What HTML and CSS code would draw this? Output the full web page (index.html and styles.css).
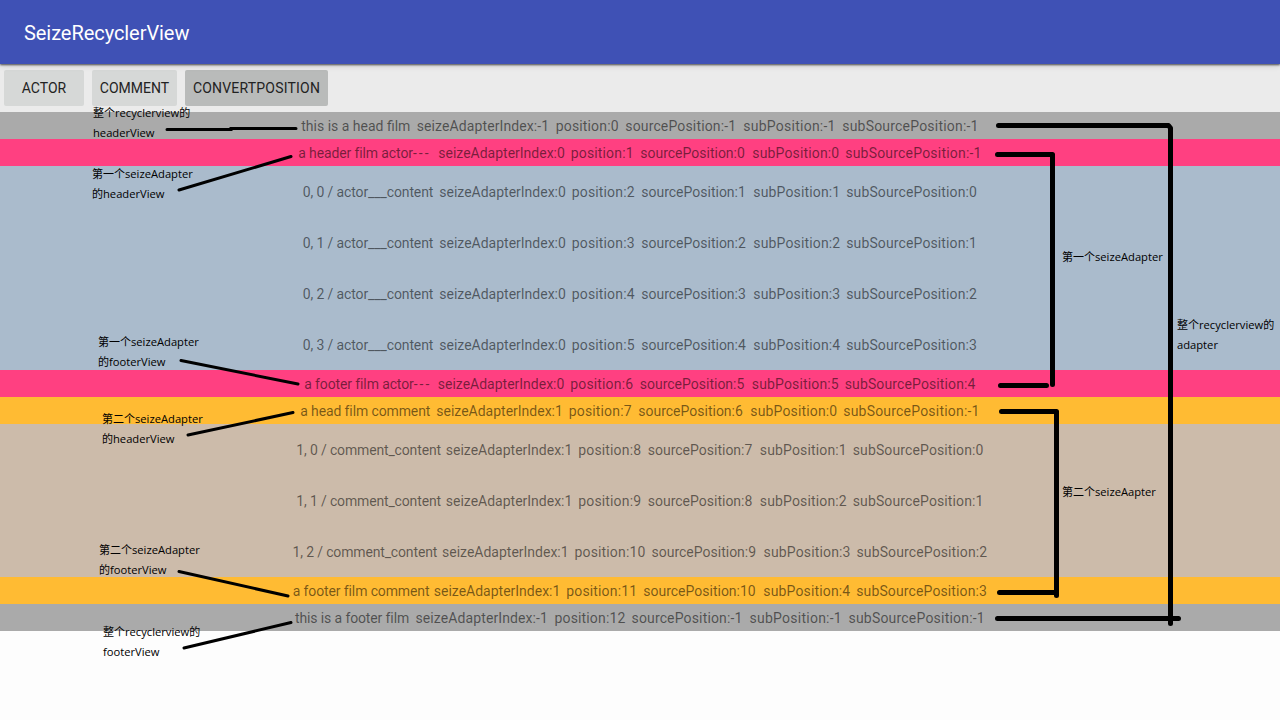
FILE: index.html
```html
<!DOCTYPE html>
<html lang="zh">
<head>
<meta charset="utf-8">
<title>SeizeRecyclerView</title>
<link rel="stylesheet" href="styles.css">
</head>
<body>
<div class="screen">
<header class="app-bar"><h1 class="title">SeizeRecyclerView</h1></header>
<nav class="toolbar">
<button class="btn btn-actor">ACTOR</button>
<button class="btn btn-comment">COMMENT</button>
<button class="btn btn-convert">CONVERTPOSITION</button>
</nav>
<main class="list">
<div class="row gray"><span class="label head">this is a head film</span><span class="seize neg">seizeAdapterIndex:-1</span><span class="pos">position:0</span><span class="source neg">sourcePosition:-1</span><span class="sub neg">subPosition:-1</span><span class="subsource neg">subSourcePosition:-1</span></div>
<div class="row pink"><span class="label actor-head">a header film actor<i>---</i></span><span class="seize">seizeAdapterIndex:0</span><span class="pos">position:1</span><span class="source">sourcePosition:0</span><span class="sub">subPosition:0</span><span class="subsource neg">subSourcePosition:-1</span></div>
<div class="row item blue"><span class="label actor">0, 0 / actor___content</span><span class="seize">seizeAdapterIndex:0</span><span class="pos">position:2</span><span class="source">sourcePosition:1</span><span class="sub">subPosition:1</span><span class="subsource">subSourcePosition:0</span></div>
<div class="row item blue"><span class="label actor">0, 1 / actor___content</span><span class="seize">seizeAdapterIndex:0</span><span class="pos">position:3</span><span class="source">sourcePosition:2</span><span class="sub">subPosition:2</span><span class="subsource">subSourcePosition:1</span></div>
<div class="row item blue"><span class="label actor">0, 2 / actor___content</span><span class="seize">seizeAdapterIndex:0</span><span class="pos">position:4</span><span class="source">sourcePosition:3</span><span class="sub">subPosition:3</span><span class="subsource">subSourcePosition:2</span></div>
<div class="row item blue"><span class="label actor">0, 3 / actor___content</span><span class="seize">seizeAdapterIndex:0</span><span class="pos">position:5</span><span class="source">sourcePosition:4</span><span class="sub">subPosition:4</span><span class="subsource">subSourcePosition:3</span></div>
<div class="row pink"><span class="label actor-foot">a footer film actor<i>---</i></span><span class="seize">seizeAdapterIndex:0</span><span class="pos">position:6</span><span class="source">sourcePosition:5</span><span class="sub">subPosition:5</span><span class="subsource">subSourcePosition:4</span></div>
<div class="row orange"><span class="label comment-head">a head film comment</span><span class="seize">seizeAdapterIndex:1</span><span class="pos">position:7</span><span class="source">sourcePosition:6</span><span class="sub">subPosition:0</span><span class="subsource neg">subSourcePosition:-1</span></div>
<div class="row item tan"><span class="label comment">1, 0 / comment_content</span><span class="seize">seizeAdapterIndex:1</span><span class="pos">position:8</span><span class="source">sourcePosition:7</span><span class="sub">subPosition:1</span><span class="subsource">subSourcePosition:0</span></div>
<div class="row item tan"><span class="label comment">1, 1 / comment_content</span><span class="seize">seizeAdapterIndex:1</span><span class="pos">position:9</span><span class="source">sourcePosition:8</span><span class="sub">subPosition:2</span><span class="subsource">subSourcePosition:1</span></div>
<div class="row item tan"><span class="label comment">1, 2 / comment_content</span><span class="seize">seizeAdapterIndex:1</span><span class="pos two">position:10</span><span class="source">sourcePosition:9</span><span class="sub">subPosition:3</span><span class="subsource">subSourcePosition:2</span></div>
<div class="row orange"><span class="label comment-foot">a footer film comment</span><span class="seize">seizeAdapterIndex:1</span><span class="pos two">position:11</span><span class="source two">sourcePosition:10</span><span class="sub">subPosition:4</span><span class="subsource">subSourcePosition:3</span></div>
<div class="row gray"><span class="label foot">this is a footer film</span><span class="seize neg">seizeAdapterIndex:-1</span><span class="pos two">position:12</span><span class="source neg">sourcePosition:-1</span><span class="sub neg">subPosition:-1</span><span class="subsource neg">subSourcePosition:-1</span></div>
</main>
<svg class="lines" width="1280" height="720" viewBox="0 0 1280 720">
<g class="pointer">
<path d="M167 129.500H231V128.500H296"/>
<path d="M179 190L291 156.500"/>
<path d="M181 360.500L298 384"/>
<path d="M188 435L293 412.500"/>
<path d="M179 571.500L288 596"/>
<path d="M184 648L291 622.500"/>
</g>
<g class="bracket">
<path d="M998.500 125.500H1168.500L1170.500 128V623.500M997.500 618.500H1178.500"/>
<path d="M997.500 154.500H1052.500V384.500M1000.500 385.500H1046.500"/>
<path d="M1001.500 411.500H1056.500V595.500M999.500 592.500H1056.500"/>
</g>
</svg>
<p class="note n1">整个<span>recyclerview</span>的<br><span>headerView</span></p>
<p class="note n2">第一个<span>seizeAdapter</span><br>的<span>headerView</span></p>
<p class="note n3">第一个<span>seizeAdapter</span><br>的<span>footerView</span></p>
<p class="note n4">第二个<span>seizeAdapter</span><br>的<span>headerView</span></p>
<p class="note n5">第二个<span>seizeAdapter</span><br>的<span>footerView</span></p>
<p class="note n6">整个<span>recyclerview</span>的<br><span>footerView</span></p>
<p class="note n7">第一个<span>seizeAdapter</span></p>
<p class="note n8">整个<span>recyclerview</span>的<br><span>adapter</span></p>
<p class="note n9">第二个<span>seizeAapter</span></p>
</div>
</body>
</html>
```
FILE: styles.css
```css
* { box-sizing: border-box; }
body { margin: 0; font-family: Roboto, "Noto Sans CJK SC", sans-serif; }
.screen { position: relative; width: 1280px; height: 720px; overflow: hidden; background: #fdfdfd; display: flex; flex-direction: column; }
.app-bar { flex: none; height: 64px; padding: 0 24px; display: flex; align-items: center; background: #3f51b5; position: relative; z-index: 1; box-shadow: 0 1px 2px rgba(0,0,0,.65), 0 2px 6px rgba(0,0,0,.12); }
.title { margin: 2px 0 0; font-size: 20px; font-weight: 400; color: #fff; letter-spacing: -.06px; }
.toolbar { flex: none; height: 48px; padding: 6px 4px; display: flex; gap: 8px; background: #ebebeb; }
.btn { height: 36px; padding: 0; border: 0; border-radius: 2px; background: #d6d8d7; color: #222; font: 14px Roboto, sans-serif; }
.btn-actor { width: 80px; }
.btn-comment { width: 85px; }
.btn-convert { width: 143px; background: #b9bbba; letter-spacing: .2px; }
.list { display: flex; flex-direction: column; }
.row { height: 27px; display: flex; align-items: center; justify-content: center; white-space: pre; font-size: 14px; color: rgba(0,0,0,.54); }
.item { height: 51px; padding-top: 1px; }
.row span { flex: none; }
.label { letter-spacing: -.12px; }
.label i { font-style: normal; letter-spacing: 2px; }
.head { width: 115.5px; letter-spacing: 0; }
.foot { width: 120.5px; }
.actor-head { width: 140px; }
.actor-foot { width: 133.5px; }
.actor { width: 136.5px; }
.comment-head { width: 136px; }
.comment-foot { width: 141px; }
.comment { width: 149.5px; letter-spacing: -.15px; }
.seize { width: 132.5px; }
.seize.neg { width: 139px; letter-spacing: .1px; }
.pos { width: 69.5px; letter-spacing: .15px; }
.pos.two { width: 77px; }
.source { width: 112px; }
.source.two { width: 120px; }
.source.neg { width: 118px; letter-spacing: .15px; }
.sub { width: 93px; letter-spacing: .15px; }
.sub.neg { width: 99px; letter-spacing: .25px; }
.subsource { width: 131px; letter-spacing: .12px; }
.subsource.neg { width: 136.5px; letter-spacing: .2px; }
.gray { background: #aaa; }
.pink { background: #ff4081; }
.blue { background: #aabbcc; }
.orange { background: #fb3; }
.tan { background: #ccbbaa; }
.lines { position: absolute; inset: 0; fill: none; stroke: #000; stroke-linecap: round; z-index: 2; }
.pointer { stroke-width: 3; }
.bracket { stroke-width: 5; stroke-linejoin: round; }
.note { position: absolute; z-index: 3; margin: 0; white-space: nowrap; font: 11px/20px "Noto Sans CJK SC", sans-serif; color: #000; }
.note span { font-family: "Open Sans", sans-serif; font-size: 11.2px; line-height: 0; }
.n1 { left: 93px; top: 102px; }
.n2 { left: 92px; top: 163px; }
.n3 { left: 98px; top: 331px; }
.n4 { left: 102px; top: 408px; }
.n5 { left: 99px; top: 539px; }
.n6 { left: 103px; top: 621px; }
.n7 { left: 1062px; top: 246px; }
.n8 { left: 1177px; top: 314px; }
.n9 { left: 1062px; top: 481px; }
```
